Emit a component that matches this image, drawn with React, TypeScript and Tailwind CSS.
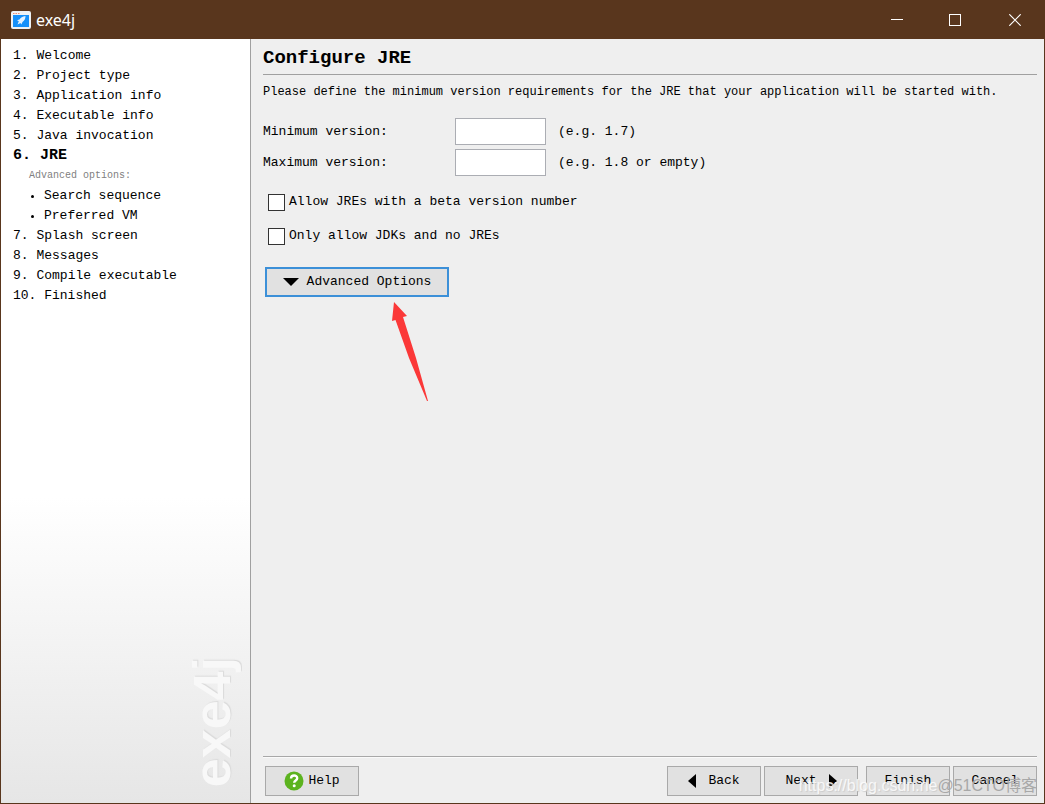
import { useState } from 'react';

interface Step {
  num: string;
  label: string;
  children?: string[];
}

const STEPS: Step[] = [
  { num: '1.', label: 'Welcome' },
  { num: '2.', label: 'Project type' },
  { num: '3.', label: 'Application info' },
  { num: '4.', label: 'Executable info' },
  { num: '5.', label: 'Java invocation' },
  { num: '6.', label: 'JRE', children: ['Search sequence', 'Preferred VM'] },
  { num: '7.', label: 'Splash screen' },
  { num: '8.', label: 'Messages' },
  { num: '9.', label: 'Compile executable' },
  { num: '10.', label: 'Finished' },
];

const CURRENT = '6.';

const BUTTON =
  'flex h-[30px] items-center justify-center border border-[#a9a9a9] bg-[#e1e1e1] text-[13px] hover:bg-[#e5f1fb]';

function AppIcon() {
  return (
    <svg width="20" height="18" viewBox="0 0 20 18" aria-hidden="true">
      <rect x="0" y="0" width="20" height="18" rx="2" fill="#eef1f4" />
      <rect x="2" y="4" width="16" height="12" fill="#1590fa" />
      <path d="M2 2.500h1.500M4.500 2.500h1.500M7 2.500h1.500" stroke="#f08a72" />
      <path d="M14.500 5c-3 .2-5 1.800-6 3.500l-2.500.8 1.800 1-1.300 3.200 3-1.500.8 1.500 1.200-2.500c2-1.500 3-3.500 3-6z" fill="#e4f2ff" />
    </svg>
  );
}

function TitleBar() {
  return (
    <header className="flex h-[39px] items-center bg-[#59361d] pl-[11px] text-white">
      <AppIcon />
      <h1 className="ml-[5px] flex-1 font-['Noto_Sans','Open_Sans',sans-serif] text-[16px]">exe4j</h1>
      <button aria-label="Minimize" className="flex h-full w-[58px] items-center justify-center hover:bg-white/10">
        <svg width="12" height="12" viewBox="0 0 12 12">
          <path d="M0 5.500h12" stroke="white" />
        </svg>
      </button>
      <button aria-label="Maximize" className="flex h-full w-[58px] items-center justify-center hover:bg-white/10">
        <svg width="12" height="12" viewBox="0 0 12 12">
          <rect x=".5" y=".5" width="11" height="11" fill="none" stroke="white" />
        </svg>
      </button>
      <button aria-label="Close" className="flex h-full w-[61px] items-center justify-center hover:bg-red-600">
        <svg width="12" height="12" viewBox="0 0 12 12">
          <path d="M.3.3l11.400 11.400M11.700.3L.3 11.700" stroke="white" strokeWidth="1.200" />
        </svg>
      </button>
    </header>
  );
}

function Sidebar() {
  return (
    <aside className="flex w-[250px] shrink-0 flex-col justify-between border-r border-[#a0a0a0] bg-linear-to-b from-white from-60% to-[#e6e6e6]">
      <ol className="pt-[7px] pl-3 text-[13px] leading-5">
        {STEPS.map((step) => (
          <li key={step.num}>
            <div className={step.num === CURRENT ? 'text-[15px] leading-5 font-bold' : ''}>
              {step.num} {step.label}
            </div>
            {step.children && (
              <>
                <div className="pl-4 text-[10px] leading-5 text-[#808080]">Advanced options:</div>
                <ul>
                  {step.children.map((child) => (
                    <li key={child} className="flex items-center pl-[18px]">
                      <span className="mr-[10px] size-[3px] rounded-full bg-black" />
                      {child}
                    </li>
                  ))}
                </ul>
              </>
            )}
          </li>
        ))}
      </ol>
      <div
        aria-hidden="true"
        className="mr-3 mb-4 rotate-180 self-end font-['Liberation_Sans',sans-serif] text-[52px] leading-[52px] font-bold text-[#f8f8f8] [text-shadow:1px_1px_1px_#dadada] [writing-mode:vertical-rl]"
      >
        exe4j
      </div>
    </aside>
  );
}

function VersionField({ id, label, hint }: { id: string; label: string; hint: string }) {
  return (
    <div className="flex items-center">
      <label htmlFor={id} className="w-48">
        {label}
      </label>
      <input id={id} type="text" className="h-[27px] w-[91px] border border-[#abadb3] bg-white px-1 outline-none" />
      <span className="ml-3">{hint}</span>
    </div>
  );
}

function CheckField({ label }: { label: string }) {
  return (
    <label className="flex items-center gap-1">
      <input type="checkbox" className="size-[17px] appearance-none border border-[#333] bg-white checked:bg-[#3c90d8]" />
      {label}
    </label>
  );
}

function HelpIcon() {
  return (
    <svg width="20" height="20" viewBox="0 0 20 20" aria-hidden="true">
      <circle cx="10" cy="10" r="9.500" fill="#5cb31f" />
      <path d="M7 7.500c0-4 6.200-4 6.200-.3 0 2.300-3 2.200-3 4.600" fill="none" stroke="white" strokeWidth="2.400" />
      <circle cx="10.200" cy="14.800" r="1.500" fill="white" />
    </svg>
  );
}

export default function App() {
  const [advanced, setAdvanced] = useState(false);

  return (
    <div className="relative flex min-h-screen flex-col bg-[#efefef] font-['Liberation_Mono',monospace] text-black">
      <TitleBar />
      <div className="flex flex-1 border-x border-b border-[#59361d]">
        <Sidebar />
        <main className="flex min-w-0 flex-1 flex-col pr-[7px] pl-3 text-[13px]">
          <h2 className="border-b border-[#a0a0a0] pt-[7px] pb-1 text-[19px] leading-6 font-bold">Configure JRE</h2>
          <p className="mt-[7px] text-[12px] leading-5">
            Please define the minimum version requirements for the JRE that your application will be started with.
          </p>

          <div className="mt-4 flex flex-col gap-1">
            <VersionField id="min-version" label="Minimum version:" hint="(e.g. 1.7)" />
            <VersionField id="max-version" label="Maximum version:" hint="(e.g. 1.8 or empty)" />
          </div>

          <div className="mt-4 flex flex-col items-start gap-[14px] pl-[5px] leading-5">
            <CheckField label="Allow JREs with a beta version number" />
            <CheckField label="Only allow JDKs and no JREs" />
          </div>

          <div className="relative mt-[21px] self-start pl-[2px]">
            <button
              aria-expanded={advanced}
              onClick={() => setAdvanced(!advanced)}
              className="flex h-[30px] w-[184px] items-center justify-center gap-2 border-2 border-[#3c90d8] bg-[#e1e1e1]"
            >
              <svg width="16" height="8" viewBox="0 0 16 8" aria-hidden="true">
                <path d="M0 0h16L8 8z" />
              </svg>
              Advanced Options
            </button>
            <svg className="absolute top-[35px] left-[129px]" width="38" height="101" viewBox="0 0 38 101" aria-hidden="true">
              <path d="M2 0L15 14l-4 1L24 56l12 43-1 0L17 56 3.500 18 0 19z" fill="#fb3838" />
            </svg>
          </div>

          <footer className="mt-auto flex border-t border-[#a8a8a8] pt-[9px] pb-[7px] pl-[2px] shadow-[inset_0_1px_0_#fafafa]">
            <button className={`${BUTTON} w-[94px] gap-1`}>
              <HelpIcon />
              Help
            </button>
            <div className="ml-auto flex gap-[3px]">
              <button className={`${BUTTON} w-[94px] gap-3`}>
                <svg width="8" height="14" viewBox="0 0 8 14" aria-hidden="true">
                  <path d="M8 0v14L0 7z" />
                </svg>
                Back
              </button>
              <button className={`${BUTTON} w-[94px] gap-3`}>
                Next
                <svg width="8" height="14" viewBox="0 0 8 14" aria-hidden="true">
                  <path d="M0 0v14l8-7z" />
                </svg>
              </button>
              <button className={`${BUTTON} ml-[5px] w-[84px]`}>Finish</button>
              <button className={`${BUTTON} w-[84px]`}>Cancel</button>
            </div>
          </footer>
        </main>
      </div>
      <div className="pointer-events-none absolute right-2 bottom-2 flex font-['Liberation_Sans','Noto_Sans_CJK_SC',sans-serif] text-[16px] leading-5">
        <span className="text-white/80 [text-shadow:1px_1px_1px_#cccccc]">https://blog.csdn.ne</span>
        <span className="text-[#a8a8a8]">@51CTO博客</span>
      </div>
    </div>
  );
}
